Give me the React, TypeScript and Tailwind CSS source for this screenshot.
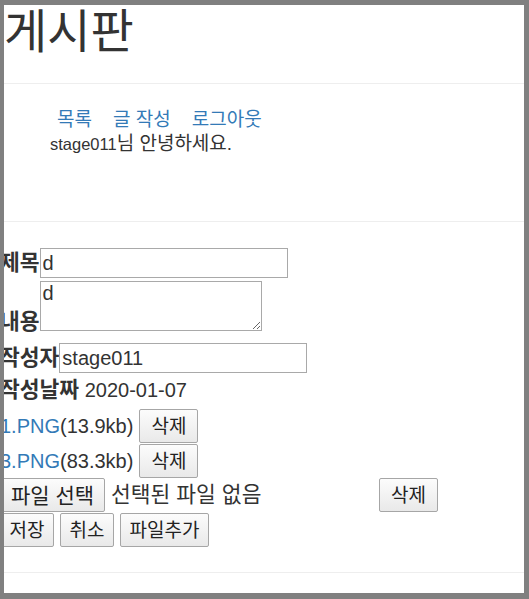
import React from 'react';

const font = 'font-["Liberation_Sans","Noto_Sans_CJK_KR",sans-serif]';

const Btn = ({ children, className = '' }: { children: React.ReactNode; className?: string }) => (
  <button
    type="button"
    className={`h-[34px] shrink-0 border border-[#a6a6a6] rounded-[2px] bg-gradient-to-b from-[#fcfcfc] to-[#e9e9e9] text-[#222] text-[19px] leading-none ${className}`}
  >
    {children}
  </button>
);

export default function App() {
  return (
    <div
      className={`h-[599px] w-[529px] overflow-hidden bg-white border-[#808080] border-t-[5px] border-l-4 border-r-[5px] border-b-[6px] text-[#333] ${font}`}
    >
      <div className="-ml-[4px]">
        <h1 className="h-[78px] pl-[4px] pt-px text-[47px] leading-[52px] font-normal">게시판</h1>
        <div className="border-t border-[#eeeeee]" />

        <div className="h-[137px] pt-[24px] text-[19px] leading-[24px]">
          <div className="flex gap-[21px] pl-[57px] text-[#337ab7]">
            <a href="#">목록</a>
            <a href="#">글 작성</a>
            <a href="#">로그아웃</a>
          </div>
          <div className="pl-[50px]">
            <span className="text-[16.5px]">stage011</span>님 안녕하세요.
          </div>
        </div>
        <div className="border-t border-[#eeeeee]" />

        <form className="pt-[26px] text-[20px]">
          <div className="flex items-center h-[30px]">
            <label className="font-bold text-[21.5px] shrink-0">제목</label>
            <input
              defaultValue="d"
              className="w-[248px] h-[30px] border border-[#a9a9a9] px-[2px] text-[20px] outline-none"
            />
          </div>

          <div className="flex items-end mt-[3px]">
            <label className="font-bold text-[21.5px] shrink-0 leading-[20px] mb-[-1px]">내용</label>
            <textarea
              defaultValue="d"
              className="w-[222px] h-[50px] border border-[#a9a9a9] px-[2px] py-0 text-[20px] leading-[22px] outline-none block"
            />
          </div>

          <div className="flex items-center h-[30px] mt-[12px]">
            <label className="font-bold text-[21.5px] shrink-0">작성자</label>
            <input
              defaultValue="stage011"
              className="w-[248px] h-[30px] border border-[#a9a9a9] px-[2px] text-[20px] outline-none"
            />
          </div>

          <div className="h-[34px] leading-[34px]">
            <span className="font-bold text-[21.5px]">작성날짜</span> 2020-01-07
          </div>

          <div className="flex items-center gap-[6px] mt-[2px]">
            <span>
              <a href="#" className="text-[#337ab7]">1.PNG</a>(13.9kb)
            </span>
            <Btn className="w-[59px]">삭제</Btn>
          </div>
          <div className="flex items-center gap-[6px] mt-px">
            <span>
              <a href="#" className="text-[#337ab7]">3.PNG</a>(83.3kb)
            </span>
            <Btn className="w-[59px]">삭제</Btn>
          </div>

          <div className="flex items-center">
            <div className="flex items-center w-[379px] shrink-0">
              <Btn className="w-[105px] text-[21px]">파일 선택</Btn>
              <span className="ml-[6px] text-[21.5px]">선택된 파일 없음</span>
            </div>
            <Btn className="w-[59px]">삭제</Btn>
          </div>

          <div className="flex gap-[6px] mt-px">
            <Btn className="h-[33px] w-[54px]">저장</Btn>
            <Btn className="h-[33px] w-[54px]">취소</Btn>
            <Btn className="h-[33px] w-[89px]">파일추가</Btn>
          </div>
        </form>

        <div className="mt-[25px] border-t border-[#eeeeee]" />
      </div>
    </div>
  );
}
